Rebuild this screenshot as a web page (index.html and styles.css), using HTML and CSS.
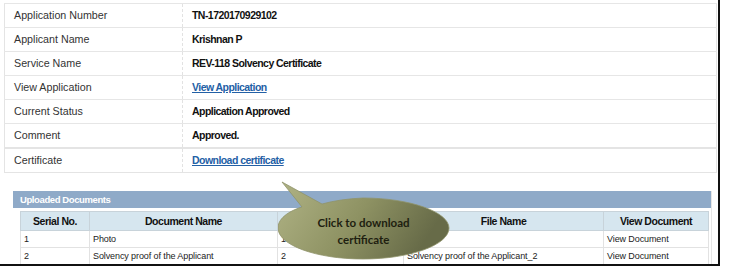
FILE: index.html
```html
<!DOCTYPE html>
<html>
<head>
<meta charset="utf-8">
<link rel="stylesheet" href="styles.css">
</head>
<body>
<div class="frame">
  <table class="details">
    <tr><td class="lbl">Application Number</td><td class="val">TN-1720170929102</td></tr>
    <tr><td class="lbl">Applicant Name</td><td class="val">Krishnan P</td></tr>
    <tr><td class="lbl">Service Name</td><td class="val">REV-118 Solvency Certificate</td></tr>
    <tr><td class="lbl">View Application</td><td class="val"><a href="#">View Application</a></td></tr>
    <tr><td class="lbl">Current Status</td><td class="val">Application Approved</td></tr>
    <tr class="thick"><td class="lbl">Comment</td><td class="val">Approved.</td></tr>
    <tr><td class="lbl">Certificate</td><td class="val"><a href="#">Download certificate</a></td></tr>
  </table>

  <div class="docs">
    <div class="docs-head">Uploaded Documents</div>
    <table class="doclist">
      <tr>
        <th class="c1">Serial No.</th>
        <th class="c2">Document Name</th>
        <th class="c3"></th>
        <th class="c4">File Name</th>
        <th class="c5">View Document</th>
      </tr>
      <tr><td>1</td><td>Photo</td><td>1</td><td></td><td>View Document</td></tr>
      <tr><td>2</td><td>Solvency proof of the Applicant</td><td>2</td><td>Solvency proof of the Applicant_2</td><td>View Document</td></tr>
    </table>
  </div>

  <div class="callout">
    <svg width="180" height="82" viewBox="0 0 180 82">
      <defs>
        <linearGradient id="g" x1="0" y1="0" x2="1" y2="0.3">
          <stop offset="0" stop-color="#b0b385"/>
          <stop offset="0.55" stop-color="#8e9263"/>
          <stop offset="1" stop-color="#676b48"/>
        </linearGradient>
      </defs>
      <path d="M4 1 L44 23 Q62 18 85 17 C132 17 171 31 171 47 C171 64 132 78 85 78 C38 78 0 64 0 47 C0 36 14 29 24 26 Z" fill="url(#g)" stroke="#8f936a" stroke-width="0.8"/>
    </svg>
    <div class="callout-text">Click to download<br>certificate</div>
  </div>
</div>
</body>
</html>
```
FILE: styles.css
```css
html, body {
  margin: 0;
  padding: 0;
  background: #ffffff;
}
body {
  font-family: "Liberation Sans", Arial, sans-serif;
  font-size: 11px;
  color: #222;
}
.frame {
  position: relative;
  width: 718px;
  height: 264px;
  border-right: 2px solid #111;
  border-bottom: 2px solid #111;
  overflow: hidden;
}
.details {
  margin: 3px 0 0 4px;
  width: 713px;
  border-collapse: collapse;
  border: 1px solid #e4e4e4;
}
.details td {
  height: 22px;
  padding: 0 0 1px 9px;
  border-top: 1px solid #e6e6e6;
  vertical-align: middle;
}
.details tr.thick td {
  border-bottom: 2px solid #e4e4e4;
}
.details .lbl {
  width: 168px;
  font-size: 10.7px;
  color: #333;
  border-right: 1px dashed #e2e2e2;
}
.details .val {
  font-weight: bold;
  font-size: 10.5px;
  letter-spacing: -0.55px;
  color: #111;
}
.details a {
  color: #2360a5;
  text-decoration: underline;
}
.docs {
  margin: 18px 0 0 13px;
  width: 698px;
  height: 80px;
  border-right: 1px solid #e6e6e6;
}
.docs-head {
  height: 17px;
  line-height: 17px;
  background: #8faac8;
  color: #fff;
  font-weight: bold;
  font-size: 9.5px;
  letter-spacing: -0.4px;
  padding-left: 7px;
}
.doclist {
  margin: 3px 0 0 7px;
  width: 689px;
  border-collapse: collapse;
  border: 1px solid #d5dadf;
}
.doclist th {
  height: 18px;
  background: #d6e6ef;
  font-weight: bold;
  font-size: 10.5px;
  letter-spacing: -0.45px;
  color: #111;
  border: 1px solid #c8d3da;
  padding: 0;
}
.doclist td {
  height: 16px;
  padding: 0 0 0 3px;
  border: 1px solid #e2e2e2;
  font-size: 9px;
  letter-spacing: -0.1px;
  color: #222;
}
.c1 { width: 68px; }
.c2 { width: 187px; }
.c3 { width: 125px; }
.c4 { width: 199px; }
.callout {
  position: absolute;
  left: 278px;
  top: 181px;
  width: 180px;
  height: 82px;
}
.callout svg {
  display: block;
}
.callout-text {
  position: absolute;
  left: 0;
  top: 33px;
  width: 171px;
  text-align: center;
  font-family: Lato, "Open Sans", sans-serif;
  font-weight: bold;
  font-size: 11.5px;
  line-height: 17px;
  color: #1e1e10;
}
```
